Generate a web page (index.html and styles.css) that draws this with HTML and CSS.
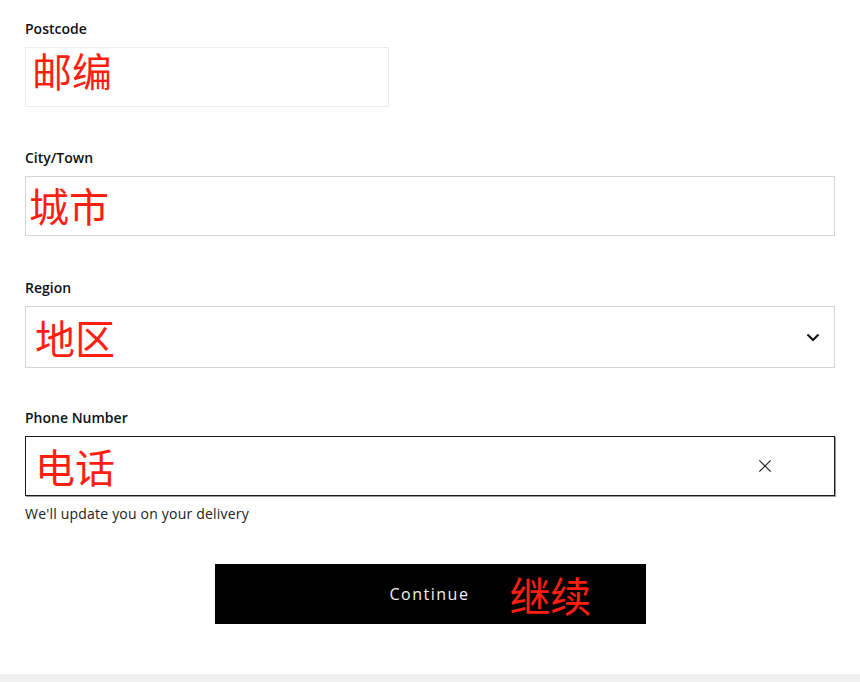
FILE: index.html
```html
<!DOCTYPE html>
<html lang="en">
<head>
    <meta charset="UTF-8">
    <meta name="viewport" content="width=device-width, initial-scale=1.0">
    <title>Delivery Address</title>
    <link rel="stylesheet" href="styles.css">
</head>
<body>
    <form class="address-form">
        <!-- Postcode -->
        <div class="field field--first">
            <label class="field-label">Postcode</label>
            <div class="field-box field-box--short field-box--faint">
                <span class="note note--up">邮编</span>
            </div>
        </div>

        <!-- City -->
        <div class="field">
            <label class="field-label">City/Town</label>
            <div class="field-box">
                <span class="note note--left">城市</span>
            </div>
        </div>

        <!-- Region -->
        <div class="field field--select">
            <label class="field-label">Region</label>
            <div class="field-box field-box--tall">
                <span class="note note--down">地区</span>
                <svg class="chevron" width="14" height="9" viewBox="0 0 14 9">
                    <path d="M1.5 1.5 L7 7 L12.5 1.5" fill="none" stroke="#111" stroke-width="2.2"/>
                </svg>
            </div>
        </div>

        <!-- Phone -->
        <div class="field field--last">
            <label class="field-label">Phone Number</label>
            <div class="field-box field-box--active">
                <span class="note note--down">电话</span>
                <svg class="clear" width="16" height="16" viewBox="0 0 16 16">
                    <path d="M1.5 1.5 L14.5 14.5 M14.5 1.5 L1.5 14.5" fill="none" stroke="#222" stroke-width="1.4"/>
                </svg>
            </div>
            <p class="hint">We'll update you on your delivery</p>
        </div>

        <div class="actions">
            <button type="button" class="continue">
                <span class="continue-text">Continue</span>
                <span class="note note--button">继续</span>
            </button>
        </div>
    </form>
    <div class="footer-band"></div>
</body>
</html>
```

FILE: styles.css
```css
body {
    margin: 0;
    font-family: 'Open Sans', 'Noto Sans', sans-serif;
    color: #111;
    background: #fff;
}

.address-form {
    padding: 19px 25px 0 25px;
}

.field {
    margin-bottom: 42px;
}

.field--first {
    margin-bottom: 41px;
}

.field--select {
    margin-bottom: 40px;
}

.field--last {
    margin-bottom: 0;
}

.field-label {
    display: block;
    font-size: 14px;
    font-weight: 600;
    line-height: 20px;
    margin-bottom: 8px;
    color: #111;
}

.field-box {
    box-sizing: border-box;
    height: 60px;
    border: 1px solid #d4d4d4;
    display: flex;
    align-items: center;
    padding: 0 14px 0 4px;
    position: relative;
}

.field-box--short {
    width: 364px;
}

.field-box--faint {
    border-color: #ececec;
}

.field-box--tall {
    height: 62px;
}

.field-box--active {
    border-color: #1a1a1a;
    box-shadow: 1px 1px 0 #9a9a9a;
}

.note {
    font-family: 'Noto Sans CJK SC', sans-serif;
    font-size: 40px;
    line-height: 40px;
    color: #ff1e10;
}

.note--up {
    margin: -15px 0 0 2px;
}

.note--left {
    margin: -3px 0 0 -1px;
}

.note--down {
    margin: 0 0 0 5px;
}

.chevron {
    margin-left: auto;
}

.clear {
    margin-left: auto;
    margin-right: 48px;
    width: 14px;
    height: 14px;
}

.hint {
    margin: 9px 0 0 0;
    font-size: 14px;
    letter-spacing: 0.2px;
    line-height: 18px;
    color: #222;
}

.actions {
    display: flex;
    justify-content: center;
    margin-top: 41px;
}

.continue {
    width: 431px;
    height: 60px;
    background: #000;
    border: none;
    color: #fff;
    display: flex;
    align-items: center;
    justify-content: flex-start;
    padding: 0 0 0 175px;
    gap: 40px;
}

.continue-text {
    font-family: 'Open Sans', sans-serif;
    font-size: 16px;
    letter-spacing: 1.5px;
    color: #f2f2f2;
}

.note--button {
    font-size: 41px;
    margin-top: 0;
}

.footer-band {
    position: absolute;
    left: 0;
    right: 0;
    top: 674px;
    height: 8px;
    background: #f0f0f0;
}
```
